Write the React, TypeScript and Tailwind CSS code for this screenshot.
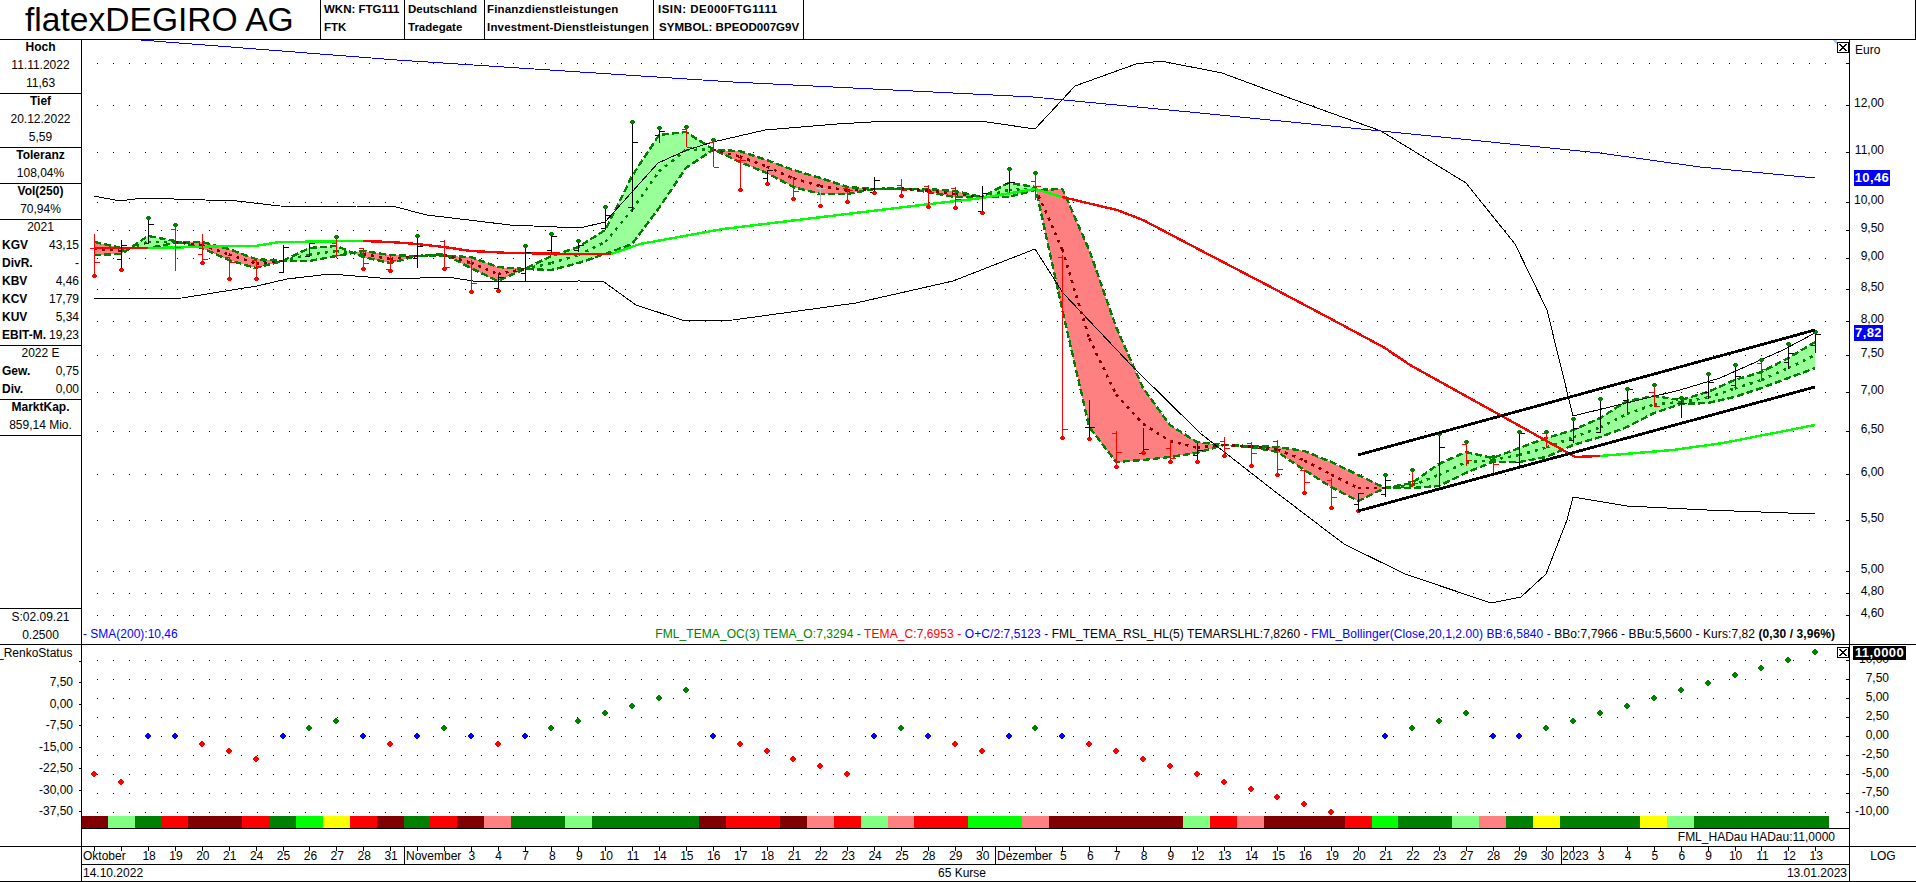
import React from "react"

// x position of a candle, y position of a price (log scale)
const cx = (i: number) => 94.3 + 26.89 * i
const py = (p: number) => 202.3 + 532 * Math.log(10 / p)
const px = (n: number) => Math.round(n) + 0.5

type Bar = [number, number, "k" | "r" | "s", number, number, "g" | "r" | ""]

// top, bottom, colour, open tick (left), close tick (right), marker
const bars: Bar[] = [
  [234, 276, "r", 248, 262, "r"],
  [240, 270, "k", 259, 245, "r"],
  [218, 243, "k", 243, 224, "g"],
  [225, 271, "r", 229, 247, "g"],
  [234, 263, "r", 254, 259, "r"],
  [257, 279, "r", 257, 262, "r"],
  [260, 279, "r", 260, 266, "r"],
  [245, 272, "k", 272, 247, ""],
  [243, 256, "k", 256, 243, ""],
  [237, 258, "r", 243, 255, "g"],
  [248, 269, "r", 248, 263, "r"],
  [256, 271, "r", 269, 260, "r"],
  [236, 268, "k", 258, 246, "g"],
  [240, 269, "r", 241, 267, "r"],
  [260, 292, "r", 263, 283, "r"],
  [275, 291, "k", 288, 277, "r"],
  [246, 281, "k", 273, 252, "g"],
  [234, 253, "k", 250, 236, "g"],
  [241, 252, "k", 250, 245, "g"],
  [207, 230, "k", 228, 215, "g"],
  [122, 212, "k", 207, 142, "g"],
  [128, 143, "k", 135, 131, "g"],
  [127, 147, "r", 129, 147, "g"],
  [140, 167, "r", 142, 167, "g"],
  [158, 190, "r", 160, 160, "r"],
  [170, 184, "k", 178, 170, "r"],
  [177, 199, "r", 177, 191, "r"],
  [188, 206, "s", 188, 188, "r"],
  [188, 202, "r", 188, 190, "r"],
  [177, 193, "k", 192, 180, "r"],
  [179, 196, "r", 185, 190, "r"],
  [185, 207, "r", 186, 192, "r"],
  [187, 208, "r", 188, 199, "r"],
  [186, 213, "k", 211, 193, "r"],
  [169, 193, "k", 183, 182, "g"],
  [173, 200, "r", 181, 186, "g"],
  [255, 438, "r", 257, 429, "r"],
  [400, 439, "k", 427, 427, "r"],
  [431, 467, "r", 433, 452, "r"],
  [428, 453, "k", 453, 449, "r"],
  [440, 462, "r", 448, 458, "r"],
  [443, 462, "k", 455, 450, "r"],
  [437, 456, "r", 441, 448, "r"],
  [442, 466, "r", 443, 453, "r"],
  [440, 475, "r", 441, 469, "r"],
  [470, 493, "r", 470, 482, "r"],
  [478, 508, "r", 480, 497, "r"],
  [493, 511, "k", 504, 493, "r"],
  [475, 497, "k", 494, 480, "g"],
  [470, 487, "r", 481, 483, "g"],
  [434, 489, "k", 488, 447, "g"],
  [442, 466, "r", 444, 460, "g"],
  [457, 474, "r", 461, 464, "g"],
  [432, 467, "k", 462, 433, "g"],
  [432, 448, "r", 433, 442, "g"],
  [419, 443, "k", 440, 428, "g"],
  [399, 432, "k", 432, 408, "g"],
  [389, 413, "k", 400, 389, "g"],
  [385, 407, "r", 392, 406, "g"],
  [398, 418, "k", 403, 403, "g"],
  [374, 399, "k", 392, 382, "g"],
  [365, 387, "k", 385, 376, "g"],
  [360, 381, "r", 363, 369, "g"],
  [344, 369, "k", 362, 353, "g"],
  [332, 353, "k", 345, 334, "g"],
]

// TEMA open / close as page y
const tema: [number, number][] = [
  [242, 255], [248, 254], [248, 236], [243, 241], [242, 248], [249, 260], [259, 268], [261, 261],
  [261, 248], [256, 246], [251, 257], [255, 263], [256, 256], [256, 254], [257, 268], [267, 281],
  [269, 269], [270, 256], [263, 247], [254, 230], [244, 176], [208, 135], [168, 132], [150, 149],
  [151, 162], [160, 173], [170, 187], [178, 194], [187, 194], [189, 189], [189, 188], [189, 192],
  [191, 197], [197, 197], [197, 183], [190, 187], [189, 310], [250, 427], [327, 462], [388, 460],
  [425, 457], [442, 453], [445, 445], [446, 447], [447, 452], [451, 470], [462, 487], [475, 501],
  [488, 488], [488, 483], [486, 464], [473, 452], [462, 458], [462, 448], [457, 438], [445, 430],
  [437, 418], [427, 401], [413, 396], [404, 400], [403, 392], [397, 380], [388, 372], [378, 358],
  [368, 342],
]

const bbUpper = "94,196 120,201 142,198 237,201 280,206 323,207 357,206 392,206 427,215 510,225 580,228 605,222 658,163 687,150 713,142 765,130 837,124 888,121 913,121 987,122 1035,129 1075,86 1136,64 1161,61 1222,73 1295,100 1381,131 1466,183 1515,244 1547,310 1573,416 1680,390 1720,378 1783,350 1815,333"
const bbLower = "94,299 182,298 257,286 287,279 330,274 393,279 447,277 480,282 580,281 604,282 636,305 685,321 733,320 856,303 953,281 1035,249 1063,293 1133,367 1200,433 1273,490 1344,544 1405,574 1491,603 1521,597 1546,574 1567,520 1573,497 1627,506 1707,510 1815,514"
const sma = "128,39 397,60 733,82 1033,97 1200,113 1381,131 1600,153 1700,167 1815,178"
const maSegments: [string, string][] = [
  ["94,248 148,248", "#ff0000"],
  ["148,248 200,247 227,246 255,246 280,242 363,241", "#00ff00"],
  ["363,241 390,242 417,244 444,247 471,251 510,253 580,254 611,254", "#ff0000"],
  ["611,254 640,244 723,229 913,206 982,198 1035,189 1062,197", "#00ff00"],
  ["1062,197 1117,210 1143,220 1200,250 1267,285 1333,320 1385,348 1410,365 1500,415 1570,454 1575,457 1600,456", "#ff0000"],
  ["1600,456 1673,450 1723,443 1815,425", "#00ff00"],
]

const D = "#800000"
const R = "#ff0000"
const P = "#ff8080"
const G = "#008000"
const L = "#80ff80"
const V = "#00ff00"
const Y = "#ffff00"
const status = [
  D, L, G, R, D, D, R, G, V, Y, R, D, G, R, D, P, G, G, L, G, G, G, G, D, R, R, D, P, R, L, P, R, R,
  V, V, P, D, D, D, D, D, L, R, P, D, D, D, R, V, G, G, L, P, G, Y, G, G, G, Y, L, G, G, G, G, G,
]

const renko = [
  -5, -6, 0, 0, -1, -2, -3, 0, 1, 2, 0, -1, 0, 1, 0, -1, 0, 1, 2, 3, 4, 5, 6, 0, -1, -2, -3, -4, -5, 0, 1, 0, -1,
  -2, 0, 1, 0, -1, -2, -3, -4, -5, -6, -7, -8, -9, -10, null, 0, 1, 2, 3, 0, 0, 1, 2, 3, 4, 5, 6, 7, 8, 9, 10, 11,
]

const priceLabels = ["12,00", "11,00", "10,00", "9,50", "9,00", "8,50", "8,00", "7,50", "7,00", "6,50", "6,00", "5,50", "5,00", "4,80", "4,60"]
const priceRows = [13, 12, 11, 10, 9.5, 9, 8.5, 8, 7.5, 7, 6.5, 6, 5.5, 5, 4.8, 4.6].map((p) => Math.round(py(p)))
const renkoRows = [660, 679, 698, 717, 736, 755, 774, 793, 812]
const renkoLabels = ["10,00", "7,50", "5,00", "2,50", "0,00", "-2,50", "-5,00", "-7,50", "-10,00"]

const dates: [number, string][] = [
  [2, "18"], [3, "19"], [4, "20"], [5, "21"], [6, "24"], [7, "25"], [8, "26"], [9, "27"], [10, "28"], [11, "31"],
  [14, "3"], [15, "4"], [16, "7"], [17, "8"], [18, "9"], [19, "10"], [20, "11"], [21, "14"], [22, "15"], [23, "16"],
  [24, "17"], [25, "18"], [26, "21"], [27, "22"], [28, "23"], [29, "24"], [30, "25"], [31, "28"], [32, "29"], [33, "30"],
  [36, "5"], [37, "6"], [38, "7"], [39, "8"], [40, "9"], [41, "12"], [42, "13"], [43, "14"], [44, "15"], [45, "16"],
  [46, "19"], [47, "20"], [48, "21"], [49, "22"], [50, "23"], [51, "27"], [52, "28"], [53, "29"], [54, "30"],
  [56, "3"], [57, "4"], [58, "5"], [59, "6"], [60, "9"], [61, "10"], [62, "11"], [63, "12"], [64, "13"],
]

const dotGrid = (rows: number[]) =>
  rows.map((y) => Array.from({ length: 109 }, (_, k) => `M${97 + 16 * k} ${y}h1v1h-1z`).join("")).join("")

// Split the band between the two TEMA lines into red and green pieces
function bandPieces() {
  const pieces: { points: string; up: boolean }[] = []
  for (let i = 0; i < tema.length - 1; i++) {
    const [o0, c0] = tema[i]
    const [o1, c1] = tema[i + 1]
    const d0 = c0 - o0
    const d1 = c1 - o1
    const x0 = cx(i)
    const x1 = cx(i + 1)
    if (d0 * d1 < 0) {
      const t = d0 / (d0 - d1)
      const xm = x0 + (x1 - x0) * t
      const ym = o0 + (o1 - o0) * t
      pieces.push({ points: `${x0},${o0} ${xm},${ym} ${x0},${c0}`, up: d0 < 0 })
      pieces.push({ points: `${xm},${ym} ${x1},${o1} ${x1},${c1}`, up: d1 < 0 })
    } else {
      pieces.push({ points: `${x0},${o0} ${x1},${o1} ${x1},${c1} ${x0},${c0}`, up: d0 + d1 < 0 })
    }
  }
  return pieces
}

function PriceChart() {
  const lineO = tema.map(([o], i) => `${cx(i)},${o}`).join(" ")
  const lineC = tema.map(([, c], i) => `${cx(i)},${c}`).join(" ")
  return (
    <svg width={1767} height={604} viewBox="82 40 1767 604" shapeRendering="crispEdges" className="block">
      <path d={dotGrid(priceRows)} fill="#000000" />
      {priceRows.map((y) => (
        <rect key={y} x={1846} y={y} width={3} height={1} fill="#000000" />
      ))}
      <polygon points="1832,40 1837,40 1837,44" fill="#99ccff" />
      {bandPieces().map((p, i) => (
        <polygon key={i} points={p.points} fill={p.up ? "#99ff99" : "#ff8080"} />
      ))}
      <polyline points={lineO} fill="none" stroke="#008000" strokeWidth={2.4} strokeDasharray="7 3" />
      <polyline points={lineC} fill="none" stroke="#008000" strokeWidth={2.4} strokeDasharray="7 3" />
      {tema.slice(0, -1).map(([o, c], i) => {
        const [o1, c1] = tema[i + 1]
        return (
          <line
            key={i}
            x1={cx(i)}
            y1={(o + c) / 2}
            x2={cx(i + 1)}
            y2={(o1 + c1) / 2}
            stroke={c + c1 > o + o1 ? "#800000" : "#008000"}
            strokeWidth={2.6}
            strokeDasharray="3 5"
          />
        )
      })}
      <polyline points={bbUpper} fill="none" stroke="#000000" strokeWidth={1} />
      <polyline points={bbLower} fill="none" stroke="#000000" strokeWidth={1} />
      <polyline points={sma} fill="none" stroke="#0000ff" strokeWidth={1} />
      {maSegments.map(([points, color]) => (
        <polyline key={points} points={points} fill="none" stroke={color} strokeWidth={2.4} />
      ))}
      {bars.map(([top, bottom, c, open, close, marker], i) => {
        const x = px(cx(i))
        const color = c === "k" ? "#000000" : c === "r" ? "#ff0000" : "#c0c0c0"
        return (
          <g key={i} stroke={color} strokeWidth={1} fill="none">
            <line x1={x} y1={top} x2={x} y2={bottom} />
            <line x1={x - 5} y1={open + 0.5} x2={x} y2={open + 0.5} />
            <line x1={x} y1={close + 0.5} x2={x + 5} y2={close + 0.5} />
            {marker === "g" && <circle cx={x} cy={top} r={2.2} fill="#008000" stroke="none" />}
            {marker === "r" && <circle cx={x} cy={bottom} r={2.2} fill="#ff0000" stroke="none" />}
          </g>
        )
      })}
      <line x1={1358} y1={455} x2={1815} y2={330} stroke="#000000" strokeWidth={2.8} />
      <line x1={1358} y1={511} x2={1815} y2={387} stroke="#000000" strokeWidth={2.8} />
    </svg>
  )
}

function RenkoChart() {
  return (
    <svg width={1767} height={183} viewBox="82 645 1767 183" shapeRendering="crispEdges" className="block">
      <path d={dotGrid(renkoRows)} fill="#000000" />
      {renkoRows.map((y) => (
        <rect key={y} x={1846} y={y} width={3} height={1} fill="#000000" />
      ))}
      {renko.map((level, i) => {
        if (level === null) return null
        const color = level === 0 ? "#0000ff" : level > 0 ? "#008000" : "#ff0000"
        const x = Math.round(cx(i))
        const y = Math.round(736 - 7.6 * level)
        // pixel diamond, six pixels across
        return (
          <path
            key={i}
            d={`M${x - 1} ${y - 3}h2v1h1v1h1v2h-1v1h-1v1h-2v-1h-1v-1h-1v-2h1v-1h1z`}
            fill={color}
          />
        )
      })}
      {status.map((color, i) => (
        <rect key={i} x={cx(i) - 13.45} y={816} width={26.89} height={12} fill={color} />
      ))}
    </svg>
  )
}

function CloseBox({ className }: { className: string }) {
  return (
    <svg width={12} height={11} viewBox="0 0 12 11" shapeRendering="crispEdges" className={`absolute ${className}`}>
      <rect x={0.5} y={0.5} width={11} height={10} fill="#ffffff" stroke="#000000" />
      <path d="M2.5 2 L9.5 9 M9.5 2 L2.5 9" stroke="#000000" strokeWidth={1} />
    </svg>
  )
}

function Row({ children, bold }: { children: React.ReactNode; bold?: boolean }) {
  return <div className={`h-[18px] leading-[14px] text-center ${bold ? "font-bold" : ""}`}>{children}</div>
}

function Ratio({ label, value }: { label: string; value: string }) {
  return (
    <div className="h-[18px] leading-[14px] flex justify-between pl-[2px] pr-[2px]">
      <span className="font-bold">{label}</span>
      <span>{value}</span>
    </div>
  )
}

function Section({ children, className = "" }: { children: React.ReactNode; className?: string }) {
  return <div className={`border-b border-black ${className}`}>{children}</div>
}

function HeaderCell({ children, className }: { children: React.ReactNode; className: string }) {
  return <div className={`flex flex-col border-r border-black font-bold text-[11.5px] ${className}`}>{children}</div>
}

function HeaderLine({ children, className = "" }: { children: React.ReactNode; className?: string }) {
  return <div className={`h-[18px] leading-[18px] whitespace-nowrap ${className}`}>{children}</div>
}

export default function App() {
  return (
    <div className="w-[1916px] h-[882px] overflow-hidden bg-white text-black text-[12px] font-['Liberation_Sans',Arial,sans-serif] flex flex-col">
      {/* Header */}
      <div className="h-[40px] shrink-0 flex border-b border-black">
        <div className="w-[321px] border-r border-black pl-[25px] text-[33.6px] leading-[40px] whitespace-nowrap">flatexDEGIRO AG</div>
        <HeaderCell className="w-[84px] pl-[3px]">
          <HeaderLine>WKN: FTG111</HeaderLine>
          <HeaderLine>FTK</HeaderLine>
        </HeaderCell>
        <HeaderCell className="w-[80px] pl-[3px]">
          <HeaderLine>Deutschland</HeaderLine>
          <HeaderLine>Tradegate</HeaderLine>
        </HeaderCell>
        <HeaderCell className="w-[169px] pl-[2px]">
          <HeaderLine className="tracking-[0.17px]">Finanzdienstleistungen</HeaderLine>
          <HeaderLine className="tracking-[0.18px]">Investment-Dienstleistungen</HeaderLine>
        </HeaderCell>
        <HeaderCell className="w-[150px] pl-[4px]">
          <HeaderLine className="tracking-[0.47px]">ISIN: DE000FTG1111</HeaderLine>
          <HeaderLine className="tracking-[0.05px] ml-[1px]">SYMBOL: BPEOD007G9V</HeaderLine>
        </HeaderCell>
        <div className="flex-1 border-r border-black" />
      </div>

      {/* Price panel */}
      <div className="h-[605px] shrink-0 flex border-b border-black">
        <div className="w-[82px] shrink-0 border-r border-black flex flex-col">
          <Section className="h-[54px]">
            <Row bold>Hoch</Row>
            <Row>11.11.2022</Row>
            <Row>11,63</Row>
          </Section>
          <Section className="h-[54px]">
            <Row bold>Tief</Row>
            <Row>20.12.2022</Row>
            <Row>5,59</Row>
          </Section>
          <Section className="h-[36px]">
            <Row bold>Toleranz</Row>
            <Row>108,04%</Row>
          </Section>
          <Section className="h-[36px]">
            <Row bold>Vol(250)</Row>
            <Row>70,94%</Row>
          </Section>
          <Section className="h-[126px]">
            <Row>2021</Row>
            <Ratio label="KGV" value="43,15" />
            <Ratio label="DivR." value="-" />
            <Ratio label="KBV" value="4,46" />
            <Ratio label="KCV" value="17,79" />
            <Ratio label="KUV" value="5,34" />
            <Ratio label="EBIT-M." value="19,23" />
          </Section>
          <Section className="h-[54px]">
            <Row>2022 E</Row>
            <Ratio label="Gew." value="0,75" />
            <Ratio label="Div." value="0,00" />
          </Section>
          <Section className="h-[36px]">
            <Row bold>MarktKap.</Row>
            <Row>859,14 Mio.</Row>
          </Section>
          <div className="flex-1" />
          <div className="h-[36px] border-t border-black pt-[1px]">
            <Row>S:02.09.21</Row>
            <Row>0.2500</Row>
          </div>
        </div>

        <div className="relative w-[1767px] shrink-0">
          <PriceChart />
          <CloseBox className="left-[1755px] top-[2px]" />
          <div className="absolute inset-x-0 bottom-0 h-[18px] leading-[16px] flex justify-between pl-[1px] pr-[14px] whitespace-nowrap">
            <span className="text-[#0000ff]">- SMA(200):10,46</span>
            <span className="tracking-[0.08px]">
              <span className="text-[#008000]">FML_TEMA_OC(3) TEMA_O:7,3294 - </span>
              <span className="text-[#ff0000]">TEMA_C:7,6953 - </span>
              <span className="text-[#0000ff]">O+C/2:7,5123 - </span>
              <span>FML_TEMA_RSL_HL(5) TEMARSLHL:7,8260 - </span>
              <span className="text-[#0000ff]">FML_Bollinger(Close,20,1,2.00) BB:6,5840 - </span>
              <span>BBo:7,7966 - BBu:5,5600 - Kurs:7,82 </span>
              <span className="font-bold">(0,30 / 3,96%)</span>
            </span>
          </div>
        </div>

        <div className="relative flex-1 border-l border-black">
          <span className="absolute left-[5px] top-[1px]">Euro</span>
          {priceLabels.map((label, i) => (
            <span
              key={label}
              className="absolute right-[32px] leading-[14px]"
              style={{ top: priceRows[i + 1] - 40 - 9 }}
            >
              {label}
            </span>
          ))}
          <span className="absolute left-[4px] top-[130px] h-[16px] w-[36px] leading-[16px] text-center bg-[#0000ff] text-white font-bold text-[13px] tracking-[0.4px]">10,46</span>
          <span className="absolute left-[4px] top-[285px] h-[16px] w-[29px] leading-[16px] text-center bg-[#0000ff] text-white font-bold text-[13px] tracking-[0.4px]">7,82</span>
        </div>
      </div>

      {/* Renko panel */}
      <div className="h-[202px] shrink-0 flex border-b border-black">
        <div className="w-[82px] shrink-0 border-r border-black flex flex-col">
          <div className="h-[16px] leading-[16px] -ml-[3px] whitespace-nowrap">_RenkoStatus</div>
          <div className="flex justify-end h-[21px]">
            <span className="w-[2px] h-[1px] bg-black" />
          </div>
          {["7,50", "0,00", "-7,50", "-15,00", "-22,50", "-30,00", "-37,50"].map((label) => (
            <div key={label} className="h-[21.5px] flex justify-between pl-0 leading-[14px]">
              <span className="w-[73px] text-right -mt-[7px]">{label}</span>
              <span className="w-[2px] h-[1px] bg-black" />
            </div>
          ))}
        </div>

        <div className="w-[1767px] shrink-0 flex flex-col">
          <div className="h-[184px] border-b border-black relative">
            <RenkoChart />
            <CloseBox className="left-[1755px] top-[2px]" />
          </div>
          <div className="flex-1 text-right pr-[14px] leading-[16px]">FML_HADau HADau:11,0000</div>
        </div>

        <div className="relative flex-1 border-l border-black">
          {renkoLabels.map((label, i) => (
            <span key={label} className="absolute right-[27px] leading-[14px]" style={{ top: renkoRows[i] - 645 - 8 }}>
              {label}
            </span>
          ))}
          <span className="absolute left-[3px] top-[1px] h-[14px] w-[53px] leading-[14px] text-center bg-black text-white font-bold text-[13px] tracking-[0.4px]">11,0000</span>
        </div>
      </div>

      {/* Time axis */}
      <div className="flex-1 flex border-b border-black">
        <div className="w-[82px] shrink-0 border-r border-black" />
        <div className="w-[1767px] shrink-0 flex flex-col">
          <div className="relative h-[18px] border-b border-black">
            <svg width={1767} height={17} viewBox="82 847 1767 17" shapeRendering="crispEdges" className="block">
              {status.map((_, i) => (
                <rect key={i} x={Math.round(cx(i))} y={847} width={1} height={4} fill="#000000" />
              ))}
              {[404, 995, 1561].map((x) => (
                <rect key={x} x={x} y={847} width={1} height={17} fill="#000000" />
              ))}
            </svg>
            <span className="absolute left-[1px] top-0 leading-[18px]">Oktober</span>
            <span className="absolute left-[324px] top-0 leading-[18px]">November</span>
            <span className="absolute left-[915px] top-0 leading-[18px]">Dezember</span>
            <span className="absolute left-[1480px] top-0 leading-[18px]">2023</span>
            {dates.map(([i, label]) => (
              <span
                key={i}
                className="absolute top-0 leading-[18px] -translate-x-1/2"
                style={{ left: cx(i) - 82 + 1 }}
              >
                {label}
              </span>
            ))}
          </div>
          <div className="flex-1 flex justify-between pl-[1px] pr-[2px] leading-[16px]">
            <span>14.10.2022</span>
            <span className="-translate-x-[3px]">65 Kurse</span>
            <span>13.01.2023</span>
          </div>
        </div>
        <div className="flex-1 border-l border-black text-center leading-[18px]">LOG</div>
      </div>
    </div>
  )
}
